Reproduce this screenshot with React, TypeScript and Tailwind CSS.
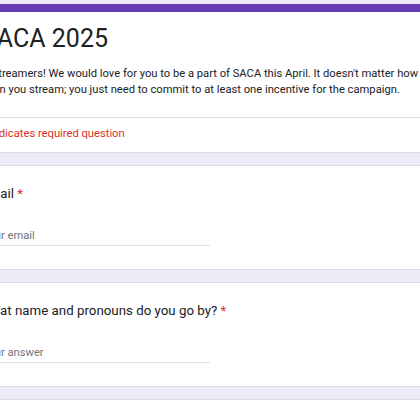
import * as React from 'react';

const font = { fontFamily: 'Roboto, "Liberation Sans", sans-serif' };

function Question({ label, placeholder }: { label: string; placeholder: string }) {
  return (
    <div className="bg-white border border-[#dadce0] rounded-lg px-[19px] pt-[18px] pb-[23px]">
      <div className="text-[13.3px] leading-5 text-[#202124] whitespace-nowrap -ml-[1px]">
        {label} <span className="text-[#d93025]">*</span>
      </div>
      <div className="mt-[24px] w-[228px] border-b border-[#e0e0e0] pb-[1px]">
        <div className="text-[11.2px] leading-4 text-[#70757a] whitespace-nowrap">{placeholder}</div>
      </div>
    </div>
  );
}

export default function App() {
  return (
    <div className="h-[420px] w-[420px] overflow-hidden bg-[#f0ebf8]" style={font}>
      <div className="-ml-[38px] w-[760px] pt-1 flex flex-col gap-3">
        <div className="bg-white rounded-lg border-t-[8px] border-t-[#673ab7] border-x border-b border-x-[#dadce0] border-b-[#dadce0]">
          <div className="px-[19px] pt-[11px]">
            <h1 className="text-[25px] leading-8 text-[#202124] whitespace-nowrap">SACA 2025</h1>
            <div className="mt-[11px] -ml-[3px] text-[11.2px] leading-4 text-[#202124] whitespace-nowrap">
              <div>Hi streamers! We would love for you to be a part of SACA this April. It doesn&apos;t matter how big or small you are or</div>
              <div>when you stream; you just need to commit to at least one incentive for the campaign.</div>
            </div>
          </div>
          <div className="mt-[19px] border-t border-[#dadce0] px-[19px] pt-[8px] pb-[10px]">
            <div className="text-[11.2px] leading-4 text-[#d93025] whitespace-nowrap">* Indicates required question</div>
          </div>
        </div>
        <Question label="Email" placeholder="Your email" />
        <Question label="What name and pronouns do you go by?" placeholder="Your answer" />
        <div className="bg-white border border-[#dadce0] rounded-lg h-[120px]" />
      </div>
    </div>
  );
}
